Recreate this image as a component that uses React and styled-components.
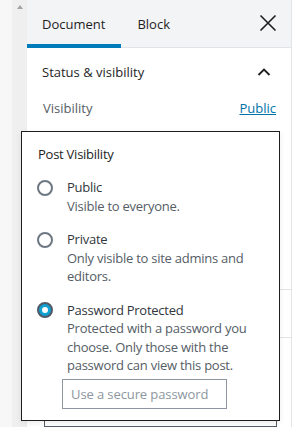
import React from "react";
import styled, { createGlobalStyle } from "styled-components";

const GlobalStyle = createGlobalStyle`
  html, body { margin: 0; padding: 0; background: #f7f7f7; }
  body { font-family: "Open Sans", "Noto Sans", sans-serif; font-size: 13px; color: #1e1e1e; }
  * { box-sizing: border-box; }
`;

const Page = styled.div`
  display: flex;
  width: 292px;
  height: 427px;
  overflow: hidden;
  background: #f7f7f7;
`;

const Gutter = styled.div`
  width: 12px;
  background: #f7f7f7;
`;

const Scrollbar = styled.div`
  width: 15px;
  background: #efefef;
  display: flex;
  justify-content: center;
  padding-top: 5px;
`;

const ArrowUp = styled.div`
  width: 0;
  height: 0;
  border-left: 3.5px solid transparent;
  border-right: 3.5px solid transparent;
  border-bottom: 4px solid #a3a3a3;
`;

const Sidebar = styled.div`
  position: relative;
  flex: 1;
  background: #fff;
  border-right: 1px solid #e2e4e7;
  display: flex;
  flex-direction: column;
`;

const TabBar = styled.div`
  height: 48px;
  background: #f3f4f5;
  border-bottom: 1px solid #e2e4e7;
  display: flex;
  align-items: stretch;
`;

const Tab = styled.div`
  display: flex;
  align-items: center;
  padding: 0 16px 0 ${(p) => (p.$first ? "15px" : "16px")};
  font-size: 13px;
  color: #1e1e1e;
  border-bottom: 4px solid ${(p) => (p.$active ? "#007cba" : "transparent")};
  padding-top: 4px;
  margin-bottom: -1px;
`;

const CloseButton = styled.div`
  margin-left: auto;
  width: 40px;
  display: flex;
  align-items: center;
  justify-content: center;
  margin-right: 3px;
`;

const SectionHeader = styled.div`
  height: 50px;
  display: flex;
  align-items: center;
  justify-content: space-between;
  padding: 0 20px 0 15px;
  font-size: 13px;
  font-weight: 500;
  color: #1e1e1e;
`;

const Row = styled.div`
  display: flex;
  justify-content: space-between;
  align-items: center;
  padding: 0 15px 0 16px;
  height: 22px;
  color: #555d66;
  font-size: 13px;
`;

const Link = styled.span`
  color: #0073aa;
  text-decoration: underline;
`;

const Spacer = styled.div`
  height: ${(p) => p.$h}px;
  border-bottom: ${(p) => (p.$line ? "1px solid #e2e4e7" : "none")};
`;

const BehindBox = styled.div`
  margin: 0 14px 0 17px;
  height: 80px;
  border: 1px solid #555d66;
`;

const Popover = styled.div`
  position: absolute;
  left: -6px;
  top: 131px;
  width: 259px;
  height: 290px;
  background: #fff;
  border: 1px solid #1e1e1e;
  box-shadow: 0 2px 6px rgba(0, 0, 0, 0.08);
  padding: 13px 15px 12px 16px;
  display: flex;
  flex-direction: column;
  letter-spacing: -0.25px;
`;

const Legend = styled.div`
  font-size: 13px;
  line-height: 18px;
  color: #1e1e1e;
  margin-bottom: 15px;
`;

const Options = styled.div`
  display: flex;
  flex-direction: column;
  gap: 15px;
`;

const Option = styled.div`
  display: grid;
  grid-template-columns: 16px 1fr;
  column-gap: 13px;
  align-items: start;
`;

const Radio = styled.span`
  width: 16px;
  height: 16px;
  border-radius: 50%;
  margin-top: 1.5px;
  margin-left: -1px;
  border: 2px solid ${(p) => (p.$checked ? "#4f5a66" : "#6c7781")};
  background: ${(p) => (p.$checked ? "#11a0d2" : "#fff")};
  display: flex;
  align-items: center;
  justify-content: center;
  &::after {
    content: "";
    display: ${(p) => (p.$checked ? "block" : "none")};
    width: 6px;
    height: 6px;
    border-radius: 50%;
    background: #fff;
  }
`;

const OptionText = styled.div`
  display: flex;
  flex-direction: column;
`;

const OptionLabel = styled.div`
  font-size: 13px;
  line-height: 18.5px;
  font-weight: 500;
  color: #32373c;
`;

const OptionDesc = styled.div`
  font-size: 13px;
  line-height: 18.5px;
  color: #555d66;
`;

const PasswordInput = styled.input`
  margin: 4px 0 0 -5px;
  width: 165px;
  height: 30px;
  border: 1px solid #8d96a0;
  border-radius: 0;
  padding: 0 8px;
  font-family: inherit;
  font-size: 13px;
  letter-spacing: -0.1px;
  color: #32373c;
  outline: none;
  &::placeholder { color: #8d96a0; }
`;

export default function App() {
  return (
    <>
      <GlobalStyle />
      <Page>
        <Gutter />
        <Scrollbar>
          <ArrowUp />
        </Scrollbar>
        <Sidebar>
          <TabBar>
            <Tab $active $first>Document</Tab>
            <Tab>Block</Tab>
            <CloseButton>
              <svg width="20" height="20" viewBox="0 0 20 20" fill="none" stroke="#1e1e1e" strokeWidth="1.6">
                <path d="M2.5 2.5 L17.5 17.5 M17.5 2.5 L2.5 17.5" />
              </svg>
            </CloseButton>
          </TabBar>
          <SectionHeader>
            <span>Status &amp; visibility</span>
            <svg width="14" height="10" viewBox="0 0 14 10" fill="none" stroke="#1e1e1e" strokeWidth="1.8">
              <path d="M1.5 8 L7 2.5 L12.5 8" />
            </svg>
          </SectionHeader>
          <Row>
            <span>Visibility</span>
            <Link>Public</Link>
          </Row>
          <Spacer $h={172} $line />
          <Spacer $h={48} $line />
          <Spacer $h={10} />
          <BehindBox />
          <Popover>
            <Legend>Post Visibility</Legend>
            <Options>
              <Option>
                <Radio />
                <OptionText>
                  <OptionLabel>Public</OptionLabel>
                  <OptionDesc>Visible to everyone.</OptionDesc>
                </OptionText>
              </Option>
              <Option>
                <Radio />
                <OptionText>
                  <OptionLabel>Private</OptionLabel>
                  <OptionDesc>Only visible to site admins and editors.</OptionDesc>
                </OptionText>
              </Option>
              <Option>
                <Radio $checked />
                <OptionText>
                  <OptionLabel>Password Protected</OptionLabel>
                  <OptionDesc>
                    Protected with a password you choose. Only those with the password can view this post.
                  </OptionDesc>
                  <PasswordInput placeholder="Use a secure password" />
                </OptionText>
              </Option>
            </Options>
          </Popover>
        </Sidebar>
      </Page>
    </>
  );
}
